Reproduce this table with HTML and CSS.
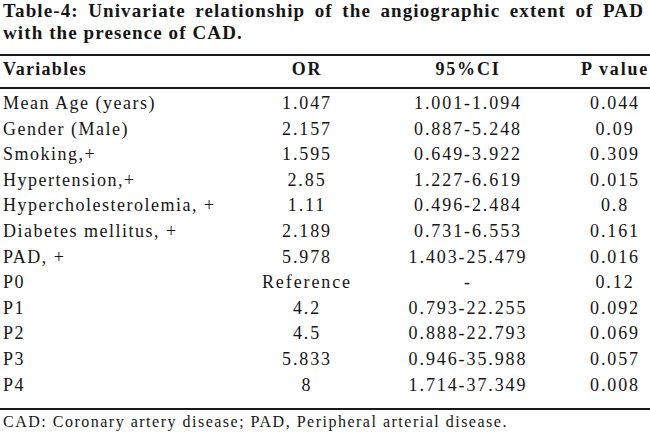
FILE: index.html
```html
<!DOCTYPE html>
<html>
<head>
<meta charset="utf-8">
<link rel="stylesheet" href="styles.css">
</head>
<body>
<div class="page">
  <p class="title">Table-4: Univariate relationship of the angiographic extent of PAD with the presence of CAD.</p>
  <div class="table">
    <div class="row head">
      <span class="var">Variables</span><span>OR</span><span>95%CI</span><span>P value</span>
    </div>
    <div class="body">
      <div class="row"><span class="var">Mean Age (years)</span><span>1.047</span><span>1.001-1.094</span><span>0.044</span></div>
      <div class="row"><span class="var">Gender (Male)</span><span>2.157</span><span>0.887-5.248</span><span>0.09</span></div>
      <div class="row"><span class="var">Smoking,+</span><span>1.595</span><span>0.649-3.922</span><span>0.309</span></div>
      <div class="row"><span class="var">Hypertension,+</span><span>2.85</span><span>1.227-6.619</span><span>0.015</span></div>
      <div class="row"><span class="var">Hypercholesterolemia, +</span><span>1.11</span><span>0.496-2.484</span><span>0.8</span></div>
      <div class="row"><span class="var">Diabetes mellitus, +</span><span>2.189</span><span>0.731-6.553</span><span>0.161</span></div>
      <div class="row"><span class="var">PAD, +</span><span>5.978</span><span>1.403-25.479</span><span>0.016</span></div>
      <div class="row"><span class="var">P0</span><span>Reference</span><span>-</span><span>0.12</span></div>
      <div class="row"><span class="var">P1</span><span>4.2</span><span>0.793-22.255</span><span>0.092</span></div>
      <div class="row"><span class="var">P2</span><span>4.5</span><span>0.888-22.793</span><span>0.069</span></div>
      <div class="row"><span class="var">P3</span><span>5.833</span><span>0.946-35.988</span><span>0.057</span></div>
      <div class="row"><span class="var">P4</span><span>8</span><span>1.714-37.349</span><span>0.008</span></div>
    </div>
  </div>
  <p class="note">CAD: Coronary artery disease; PAD, Peripheral arterial disease.</p>
</div>
</body>
</html>
```
FILE: styles.css
```css
html, body {
  margin: 0;
  padding: 0;
  background: #ffffff;
}
body, p, div, span {
  font-family: "Liberation Serif", "Times New Roman", serif;
}
.page {
  width: 650px;
  color: #151515;
}
.title {
  margin: 0;
  padding: 0 6px 0 3px;
  font-size: 19px;
  font-weight: bold;
  line-height: 22px;
  letter-spacing: 1.1px;
  text-align: justify;
}
.table {
  margin-top: 10px;
  width: 650px;
  font-size: 18px;
}
.row {
  display: grid;
  grid-template-columns: 258px 98px 224px 70px;
  line-height: 25.6px;
  white-space: nowrap;
  letter-spacing: 1.9px;
}
.row span {
  text-align: center;
}
.row .var {
  text-align: left;
  padding-left: 3px;
  letter-spacing: 1.5px;
}
.head {
  border-top: 2px solid #1a1a1a;
  border-bottom: 2px solid #1a1a1a;
  font-weight: bold;
  line-height: 26px;
  padding-bottom: 5px;
  letter-spacing: 1.8px;
}
.head .var {
  letter-spacing: 1.3px;
}
.body {
  padding: 2px 0 10px 0;
  border-bottom: 2px solid #1a1a1a;
}
.note {
  margin: 2px 0 0 0;
  padding-left: 3px;
  font-size: 16px;
  line-height: 20px;
  letter-spacing: 1.5px;
}
```
